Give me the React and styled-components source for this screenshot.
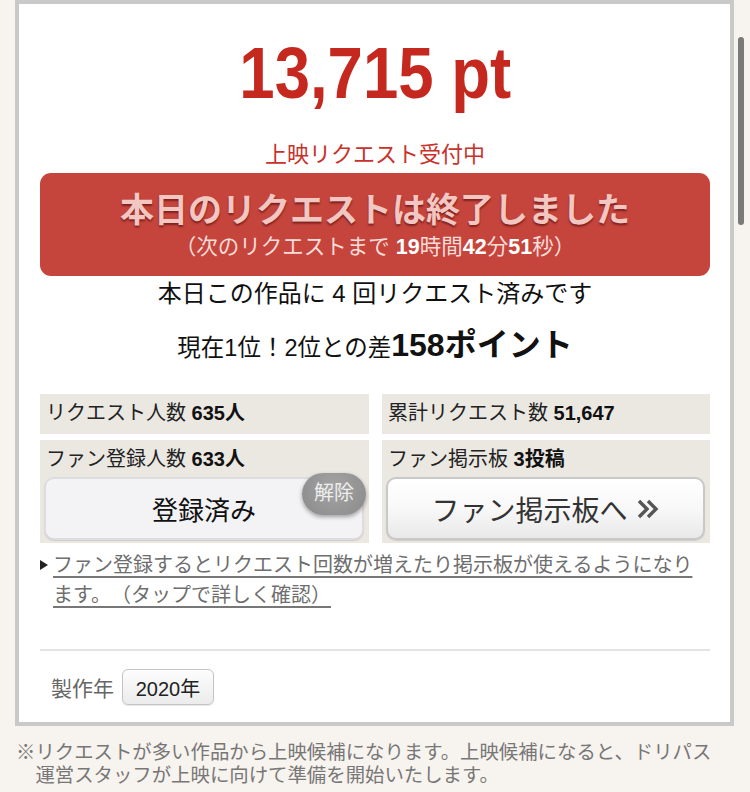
import styled, { createGlobalStyle } from "styled-components";

const GlobalStyle = createGlobalStyle`
  html, body {
    margin: 0;
    padding: 0;
    background: #f7f3ee;
  }
  body {
    font-family: "Liberation Sans", "Noto Sans CJK JP", sans-serif;
    color: #222;
    text-spacing-trim: space-all;
  }
`;

const stats = [
  { label: "リクエスト人数", value: "635人" },
  { label: "累計リクエスト数", value: "51,647" },
];

const App = () => {
  return (
    <Page>
      <GlobalStyle />
      <Card>
        <Points>
          <span>13,715 pt</span>
        </Points>
        <Status>上映リクエスト受付中</Status>
        <Banner>
          <BannerTitle>本日のリクエストは終了しました</BannerTitle>
          <BannerSub>
            （次のリクエストまで <b>19</b>時間<b>42</b>分<b>51</b>秒）
          </BannerSub>
        </Banner>
        <Note>本日この作品に 4 回リクエスト済みです</Note>
        <Rank>
          現在1位！2位との差<strong>158ポイント</strong>
        </Rank>

        <StatGrid>
          {stats.map((s) => (
            <Stat key={s.label}>
              <StatLabel>
                {s.label} <b>{s.value}</b>
              </StatLabel>
            </Stat>
          ))}
          <Stat $tall>
            <StatLabel>
              ファン登録人数 <b>633人</b>
            </StatLabel>
            <ActionButton $done>
              登録済み
              <Badge>解除</Badge>
            </ActionButton>
          </Stat>
          <Stat $tall>
            <StatLabel>
              ファン掲示板 <b>3投稿</b>
            </StatLabel>
            <ActionButton>
              ファン掲示板へ
              <svg width="24" height="24" viewBox="0 0 24 24">
                <path
                  d="M3 4 L11 12 L3 20 M12 4 L20 12 L12 20"
                  fill="none"
                  stroke="#555"
                  strokeWidth="3.4"
                />
              </svg>
            </ActionButton>
          </Stat>
        </StatGrid>

        <InfoLink>
          <Arrow />
          <LinkText href="#">
            ファン登録するとリクエスト回数が増えたり掲示板が使えるようになります。（タップで詳しく確認）
          </LinkText>
        </InfoLink>

        <Divider />

        <YearRow>
          製作年
          <YearTag>2020年</YearTag>
        </YearRow>
      </Card>

      <Footnote>
        ※リクエストが多い作品から上映候補になります。上映候補になると、ドリパス
        <br />
        運営スタッフが上映に向けて準備を開始いたします。
      </Footnote>
      <Scrollbar />
    </Page>
  );
};

const Page = styled.div`
  min-height: 792px;
  padding-bottom: 20px;
`;

const Card = styled.div`
  margin: 0 16px 0 15px;
  border: 4px solid #c9c9c9;
  background: #fff;
  padding: 34px 20px 17px 21px;
  display: flex;
  flex-direction: column;
`;

const Points = styled.div`
  height: 70px;
  line-height: 70px;
  text-align: center;
  font-size: 73px;
  font-weight: bold;
  color: #c5281e;

  span {
    display: inline-block;
    transform: scaleX(0.87);
  }
`;

const Status = styled.div`
  margin-top: 35px;
  line-height: 24px;
  text-align: center;
  font-size: 22px;
  color: #c8322b;
`;

const Banner = styled.div`
  margin-top: 6px;
  height: 103px;
  box-sizing: border-box;
  padding-top: 17px;
  border-radius: 11px;
  background: #c5453d;
  text-align: center;
`;

const BannerTitle = styled.div`
  line-height: 40px;
  font-size: 34px;
  font-weight: bold;
  color: #f2c6c1;
  text-shadow: 0 2px 2px rgba(70, 0, 0, 0.55);
`;

const BannerSub = styled.div`
  margin-top: 3px;
  line-height: 28px;
  font-size: 21.5px;
  color: #f8dcd8;

  b {
    color: #fff;
  }
`;

const Note = styled.div`
  margin-top: 3px;
  line-height: 30px;
  text-align: center;
  font-size: 24px;
  color: #111;
`;

const Rank = styled.div`
  margin-top: 16px;
  line-height: 40px;
  text-align: center;
  font-size: 23.5px;
  color: #111;

  strong {
    font-size: 32px;
  }
`;

const StatGrid = styled.div`
  margin-top: 26px;
  display: grid;
  grid-template-columns: 329px 328px;
  column-gap: 13px;
  row-gap: 6px;
`;

const Stat = styled.div`
  background: #ebe8e2;
  padding: ${(p) => (p.$tall ? "6px 5px 3px 6px" : "6px 6px")};
  height: ${(p) => (p.$tall ? "103px" : "40px")};
  box-sizing: border-box;
  font-size: 20px;
  color: #222;
  display: flex;
  flex-direction: column;

  b {
    color: #111;
  }
`;

const StatLabel = styled.div`
  line-height: 26px;
`;

const ActionButton = styled.div`
  position: relative;
  margin: 5px 0 0 -2px;
  height: 63px;
  box-sizing: border-box;
  border-radius: 10px;
  border: 2px solid ${(p) => (p.$done ? "#dddddf" : "#c8c8c8")};
  background: ${(p) =>
    p.$done
      ? "#f3f3f5"
      : "linear-gradient(#ffffff 0%, #f8f8f8 50%, #e9e9e9 100%)"};
  box-shadow: 0 1px 1px rgba(0, 0, 0, 0.12);
  display: flex;
  align-items: center;
  justify-content: center;
  gap: 8px;
  font-size: ${(p) => (p.$done ? "26px" : "28px")};
  color: ${(p) => (p.$done ? "#111" : "#333")};
`;

const Badge = styled.span`
  position: absolute;
  top: -6px;
  right: -4px;
  width: 64px;
  height: 42px;
  border-radius: 21px;
  background: radial-gradient(circle at 50% 35%, #a4a4a4, #8a8a8a);
  box-shadow: 0 2px 4px rgba(0, 0, 0, 0.35);
  color: #eeeeee;
  font-size: 20px;
  line-height: 40px;
  text-align: center;
`;

const InfoLink = styled.div`
  margin-top: 7px;
  display: flex;
  align-items: flex-start;
`;

const Arrow = styled.span`
  flex: none;
  width: 0;
  height: 0;
  margin: 10px 5px 0 0;
  border-left: 8px solid #222;
  border-top: 5px solid transparent;
  border-bottom: 5px solid transparent;
`;

const LinkText = styled.a`
  line-height: 30px;
  font-size: 20px;
  color: #6e6e6e;
  text-decoration: underline;
  text-decoration-color: #777;
  text-decoration-thickness: 2px;
  text-underline-offset: 4px;
`;

const Divider = styled.div`
  margin-top: 39px;
  height: 2px;
  background: #e3e3e3;
`;

const YearRow = styled.div`
  margin-top: 18px;
  padding-left: 11px;
  display: flex;
  align-items: center;
  gap: 8px;
  font-size: 21px;
  color: #666;
`;

const YearTag = styled.span`
  width: 92px;
  height: 36px;
  box-sizing: border-box;
  border: 1px solid #c4c4c4;
  border-radius: 6px;
  background: linear-gradient(#fdfdfd, #ececec);
  box-shadow: 0 1px 1px rgba(0, 0, 0, 0.1);
  display: flex;
  align-items: center;
  justify-content: center;
  font-size: 20px;
  color: #222;
`;

const Footnote = styled.p`
  margin: 15px 12px 0 16px;
  padding-left: 1em;
  text-indent: -1em;
  line-height: 23px;
  font-size: 19.4px;
  color: #777;
`;

const Scrollbar = styled.div`
  position: fixed;
  top: 37px;
  right: 6px;
  width: 6px;
  height: 188px;
  border-radius: 3px;
  background: #7a7a78;
`;

export default App;
